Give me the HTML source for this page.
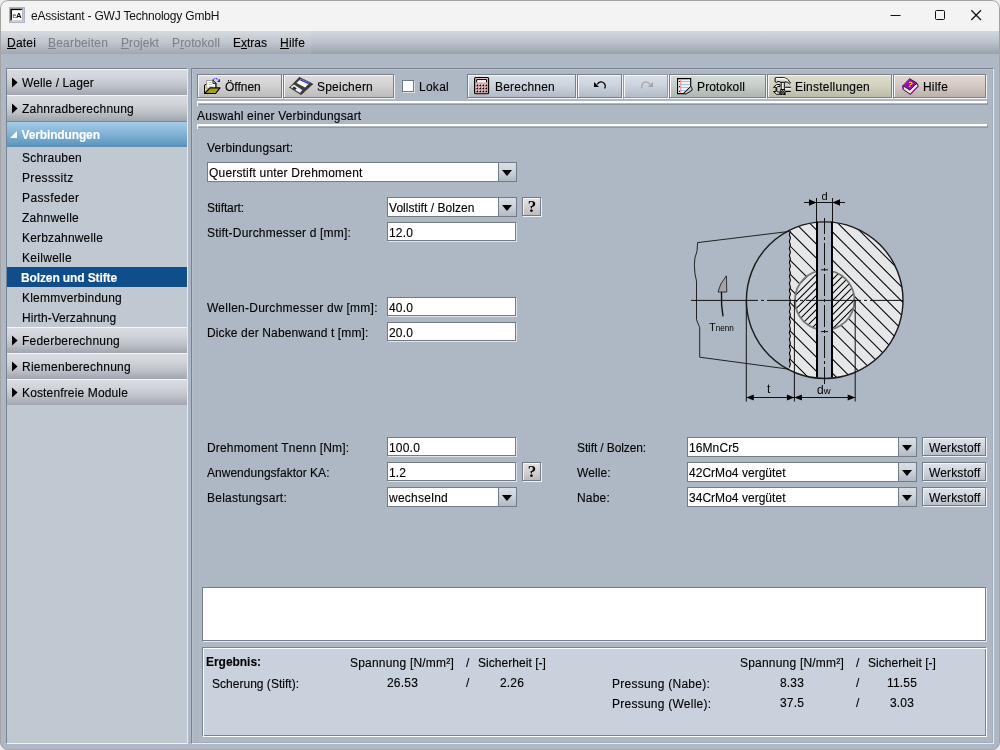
<!DOCTYPE html>
<html lang="de">
<head>
<meta charset="utf-8">
<title>eAssistant - GWJ Technology GmbH</title>
<style>
*{box-sizing:border-box;margin:0;padding:0}
html,body{width:1000px;height:750px;overflow:hidden;background:#ececec}
body{font-family:"Liberation Sans",Arial,sans-serif;font-size:12px;color:#000;position:relative;line-height:14px}
.a{position:absolute}
.t{position:absolute;white-space:nowrap;line-height:14px;height:14px;-webkit-text-stroke:0.12px currentColor}
#win{will-change:transform;position:absolute;left:0;top:0;width:1000px;height:750px;border-radius:8px;overflow:hidden;background:#adb8c4}
#frame{position:absolute;left:0;top:0;width:1000px;height:750px;border-radius:8px;border:1px solid #a3a3a3;z-index:50}
#title{position:absolute;left:0;top:0;width:1000px;height:31px;background:#f3f3f3}
#menu{position:absolute;left:0;top:31px;width:1000px;height:23px;background:linear-gradient(#d3d8de 0%,#bbc2cb 50%,#9da5af 94%,#99a1ab 100%)}
.dis{color:#7d828a}
u{text-decoration:none;border-bottom:1px solid currentColor;display:inline-block;height:13px;line-height:14px}
#side{position:absolute;left:6px;top:68px;width:182px;height:676px;background:#c0c8d1;border-top:1px solid #79828d;border-left:1px solid #79828d;border-right:1px solid #e6eaee;border-bottom:1px solid #f0f3f6}
.hd{position:absolute;left:7px;width:180px;height:26px;border-top:1px solid #f3f5f7;background:linear-gradient(#d8dce1 0%,#d1d5db 30%,#bbc0c7 68%,#a0a5ae 100%)}
.hd.sel{border-top:1px solid #6b8ea6;background:linear-gradient(#a6cbe7 0%,#8fbcdd 30%,#70a5cb 70%,#5a8fb8 100%)}
.ar{position:absolute;left:5px;top:7px;width:6px;height:11px;background:#000;clip-path:polygon(0 0.6px,5.6px 5.5px,0 10.400px)}
.ad{position:absolute;left:3px;top:9px;width:0;height:0;border-bottom:7px solid #fff;border-left:7px solid transparent}
#main{position:absolute;left:191px;top:68px;width:803px;height:676px;border-top:1px solid #79828d;border-left:1px solid #79828d;border-right:1px solid #e6eaee;border-bottom:1px solid #e6eaee;box-shadow:inset 1px 1px 0 #b8c2cd,inset -1px -1px 0 #a2adb9}
.sep{position:absolute;left:197px;width:790px;height:3px}
.sep:before{content:"";position:absolute;left:1px;top:1px;width:789px;height:2px;border-right:1px solid #8d96a1;border-bottom:1px solid #8d96a1}
.sep:after{content:"";position:absolute;left:0;top:0;width:789px;height:3px;border-top:2px solid #fff;border-left:1px solid #fff}
#log{position:absolute;left:202px;top:587px;width:785px;height:55px;background:#fff;border-top:1px solid #757e89;border-left:1px solid #757e89;border-right:1px solid #e8ebef;border-bottom:1px solid #e8ebef;box-shadow:inset -1px -1px 0 #757e89}
#res{position:absolute;left:202px;top:647px;width:785px;height:90px;background:#c8d1dc;border-top:1px solid #79828d;border-left:1px solid #79828d;border-right:1px solid #fff;border-bottom:1px solid #fff;box-shadow:inset 1px 1px 0 #fff,inset -1px -1px 0 #79828d}
.btn{position:absolute;top:74px;height:24px;border:1px solid #78808a;box-shadow:1px 1px 0 #f0f2f5,inset 1px 1px 0 #f4f6f8}
.btn.off{border-color:#949ca6}
.g0{background:linear-gradient(#dedede,#d2d2d2 45%,#bcbcbc)}
.g1{background:linear-gradient(#dbe0e7,#cdd4dd 45%,#b2bbc6)}
.g2{background:linear-gradient(#d5dcd7,#c7cfca 45%,#adb6b2)}
.g3{background:linear-gradient(#dfdecc,#d4d3c1 45%,#bbbba9)}
.g4{background:linear-gradient(#e2d8d2,#d6cac4 45%,#bcb0ab)}
.cb{position:absolute;height:20px;background:#fff;border:1px solid #727c87}
.cb i{position:absolute;right:0;top:0;width:18px;height:18px;border-left:1px solid #727c87;background:linear-gradient(#dbe0e7,#ccd3dc 45%,#b0bac5)}
.cb i:after{content:"";position:absolute;left:3px;top:7px;border-top:6px solid #000;border-left:5px solid transparent;border-right:5px solid transparent}
.tf{position:absolute;height:19px;background:#fff;border:1px solid #727c87;box-shadow:1px 1px 0 #dfe4e9}
.qb{position:absolute;width:19px;height:19px;border:1px solid #727a84;box-shadow:1px 1px 0 #f0f2f5,inset 1px 1px 0 #f6f6f6;background:linear-gradient(#e4e4e4,#d4d4d4 45%,#bcbcbc);font-family:"Liberation Serif",serif;font-weight:bold;font-size:17px;line-height:18px;text-align:center;padding-left:1px}
.wb{position:absolute;width:64px;height:19px;border:1px solid #727a84;box-shadow:1px 1px 0 #f0f2f5,inset 1px 1px 0 #f4f6f8;background:linear-gradient(#dfe3e9,#d0d6de 45%,#b6bfc9)}
</style>
</head>
<body>
<div id="win">
<div id="title"></div>
<svg class="a" style="left:9px;top:7px" width="16" height="16" viewBox="0 0 16 16"><rect width="16" height="16" fill="#a9b5c5"/><rect x="1.200" y="1.600" width="13.600" height="13.400" fill="#d0d0d0"/><rect x="1.400" y="1.800" width="12.200" height="12" fill="#000"/><rect x="2.900" y="3.100" width="10.700" height="10.700" fill="#fff"/><path d="M1.400 13.800l1.500-1.400v1.400zM13.600 1.800l-1.400 1.300h1.400z" fill="#d0d0d0"/><text x="3.400" y="10.800" font-family="Liberation Sans, sans-serif" font-size="7" fill="#333">e</text><text x="6.900" y="10.800" font-family="Liberation Sans, sans-serif" font-weight="bold" font-size="7.800" fill="#000">A</text></svg>
<div class="t" style="left:31px;top:9px;font-size:12px;letter-spacing:-0.2px;color:#111;-webkit-text-stroke:0">eAssistant - GWJ Technology GmbH</div>
<svg class="a" style="left:880px;top:0" width="120" height="31" viewBox="0 0 120 31" fill="none" stroke="#111" stroke-width="1"><path d="M10.500 15.500h10"/><rect x="55.500" y="10.500" width="9" height="9" rx="1"/><path d="M91.300 10.300l9.700 9.700M101 10.300l-9.700 9.700" stroke-width="1.250"/></svg>
<div id="menu"></div><div class="a" style="left:0;top:31px;width:311px;height:23px;background:rgba(255,255,255,0.07)"></div>
<div class="t" style="left:7px;top:36px;letter-spacing:0.197px"><u>D</u>atei</div>
<div class="t dis" style="left:48px;top:36px;letter-spacing:0.196px"><u>B</u>earbeiten</div>
<div class="t dis" style="left:121px;top:36px;letter-spacing:0.093px"><u>P</u>rojekt</div>
<div class="t dis" style="left:172px;top:36px;letter-spacing:0.146px">P<u>r</u>otokoll</div>
<div class="t" style="left:233px;top:36px;letter-spacing:-0.001px">E<u>x</u>tras</div>
<div class="t" style="left:280px;top:36px;letter-spacing:0.199px"><u>H</u>ilfe</div>
<div id="side"></div>
<div class="hd" style="top:69px"><i class="ar"></i></div>
<div class="t" style="left:22px;top:76px;letter-spacing:0.100px">Welle / Lager</div>
<div class="hd" style="top:95px"><i class="ar"></i></div>
<div class="t" style="left:22px;top:102px;letter-spacing:0.230px">Zahnradberechnung</div>
<div class="hd sel" style="top:121px"><i class="ad"></i></div>
<div class="t" style="left:21.5px;top:128px;letter-spacing:-0.139px;font-weight:bold;color:#fff">Verbindungen</div>
<div class="t" style="left:22px;top:151px;letter-spacing:0.217px">Schrauben</div>
<div class="t" style="left:22px;top:171px;letter-spacing:0.314px">Presssitz</div>
<div class="t" style="left:22px;top:191px;letter-spacing:0.386px">Passfeder</div>
<div class="t" style="left:22px;top:211px;letter-spacing:0.256px">Zahnwelle</div>
<div class="t" style="left:22px;top:231px;letter-spacing:0.176px">Kerbzahnwelle</div>
<div class="t" style="left:22px;top:251px;letter-spacing:0.294px">Keilwelle</div>
<div class="a" style="left:7px;top:267px;width:180px;height:20px;background:#0f4e8b"></div>
<div class="t" style="left:21px;top:271px;letter-spacing:-0.117px;font-weight:bold;color:#fff">Bolzen und Stifte</div>
<div class="t" style="left:22px;top:291px;letter-spacing:0.219px">Klemmverbindung</div>
<div class="t" style="left:22px;top:311px;letter-spacing:0.059px">Hirth-Verzahnung</div>
<div class="hd" style="top:327px"><i class="ar"></i></div>
<div class="t" style="left:22px;top:334px;letter-spacing:0.218px">Federberechnung</div>
<div class="hd" style="top:353px"><i class="ar"></i></div>
<div class="t" style="left:22px;top:360px;letter-spacing:0.266px">Riemenberechnung</div>
<div class="hd" style="top:379px"><i class="ar"></i></div>
<div class="t" style="left:22px;top:386px;letter-spacing:0.145px">Kostenfreie Module</div>
<div id="main"></div>
<div class="btn g0" style="left:197px;width:85px"></div>
<div class="btn g0" style="left:283px;width:111px"></div>
<div class="a" style="left:402px;top:80px;width:12px;height:12px;background:#fff;border:1px solid #727a85;box-shadow:1px 1px 0 #dde2e8"></div>
<div class="btn g1" style="left:467px;width:109px"></div>
<div class="btn g1" style="left:577px;width:45px"></div>
<div class="btn g1 off" style="left:623px;width:45px"></div>
<div class="btn g2" style="left:669px;width:97px"></div>
<div class="btn g3" style="left:767px;width:125px"></div>
<div class="btn g4" style="left:893px;width:93px"></div>
<svg class="a" style="left:204px;top:78px" width="17" height="17" viewBox="0 0 17 17">
  <path d="M8.700 2.300Q11.500-1.300 14.200 1.900" fill="none" stroke="#3434e4" stroke-width="1.100" stroke-dasharray="1.300 0.700"/><path d="M16 0.700v3.300h-3z" fill="#1c1cf0"/>
  <path d="M2.700 2.500h6.300l2.700 2.700v5h-9z" fill="#fff" stroke="#8a8a8a" stroke-width="0.800"/><path d="M8.800 2.300l3.200 3.200v4" fill="none" stroke="#000" stroke-width="1.100"/><path d="M9 2.800v2.600h2.600" fill="#fff" stroke="#000" stroke-width="0.900"/>
  <path d="M4.500 4.500h3.500M4.500 6.500h4M4.500 8.500h5" stroke="#c4c4c4" stroke-width="0.800"/>
  <path d="M0.900 7.200l1.500-0.700v8.200l-1.500 0.800z" fill="#dcdc48"/><path d="M0.500 15.600V7l1.900-0.900" fill="none" stroke="#000" stroke-width="1"/>
  <path d="M0.600 15.500l5.400-5.600h10l-4.300 5.600z" fill="#a0a010" stroke="#000" stroke-width="1.100" stroke-linejoin="round"/>
</svg>
<svg class="a" style="left:288px;top:76px" width="26" height="20" viewBox="-0.500 -0.600 26 20">
  <path d="M10.800 0.700l13.600 6.700-11.800 10.700-11.600-7.200z" fill="#3c3c3c" stroke="#1a1a1a" stroke-width="0.800" stroke-dasharray="1 0.700"/>
  <path d="M12.300 2.500l8.500 4-4.200 4.300-8.600-4.300z" fill="#fff"/><path d="M12.300 2.500l8.500 4-1 1.100-8.600-4z" fill="#3c3cf0"/>
  <path d="M2 10.300l3.500-2.300 8.300 5.500-2.300 3z" fill="#e8e8e8"/><path d="M5.200 9.800l3 1.900-1.600 1.700-2.600-1.700z" fill="#222"/><path d="M9 12l2.400 1.500-1.400 1.700-2.300-1.600z" fill="#f4f4f4"/>
</svg>
<svg class="a" style="left:474px;top:77px" width="16" height="18" viewBox="0 0 16 18">
  <rect x="0.600" y="0.600" width="14" height="16.200" rx="1.100" fill="#dcaab2" stroke="#000" stroke-width="1.100"/><path d="M1.500 1.600h12.200" stroke="#f0d4d8" stroke-width="0.800"/>
  <rect x="2.700" y="2.900" width="9.800" height="2.300" fill="#fff"/><path d="M2.700 5.200V2.600h9.800V5.200" fill="none" stroke="#000" stroke-width="1"/>
  <g fill="#000"><rect x="2.500" y="7.600" width="1.600" height="1.600"/><rect x="5.500" y="7.600" width="1.600" height="1.600"/><rect x="8.500" y="7.600" width="1.600" height="1.600"/><rect x="11.500" y="7.600" width="1.600" height="1.600"/>
  <rect x="2.500" y="10.600" width="1.600" height="1.600"/><rect x="5.500" y="10.600" width="1.600" height="1.600"/><rect x="8.500" y="10.600" width="1.600" height="1.600"/><rect x="11.500" y="10.600" width="1.600" height="1.600"/>
  <rect x="2.500" y="13.600" width="1.600" height="1.600"/><rect x="5.500" y="13.600" width="1.600" height="1.600"/><rect x="8.500" y="13.600" width="1.600" height="1.600"/><rect x="11.500" y="13.600" width="1.600" height="1.600"/></g>
  <g fill="#fff" opacity="0.800"><rect x="1.800" y="7" width="1" height="1"/><rect x="4.800" y="7" width="1" height="1"/><rect x="7.800" y="7" width="1" height="1"/><rect x="10.800" y="7" width="1" height="1"/>
  <rect x="1.800" y="10" width="1" height="1"/><rect x="4.800" y="10" width="1" height="1"/><rect x="7.800" y="10" width="1" height="1"/><rect x="10.800" y="10" width="1" height="1"/>
  <rect x="1.800" y="13" width="1" height="1"/><rect x="4.800" y="13" width="1" height="1"/><rect x="7.800" y="13" width="1" height="1"/><rect x="10.800" y="13" width="1" height="1"/></g>
</svg>
<svg class="a" style="left:593px;top:81px" width="14" height="10" viewBox="0 0 14 10">
  <path d="M1 1v5h5z" fill="#000"/><path d="M4 3.500q3.500-4.500 7.200-1.200q2 2.300 0.400 5.200" fill="none" stroke="#000" stroke-width="1.200"/></svg>
<svg class="a" style="left:640px;top:81px" width="14" height="10" viewBox="0 0 14 10">
  <path d="M13 1v5h-5z" fill="#a2a2a2"/><path d="M10 3.500q-3.500-4.500-7.200-1.200q-2 2.300-0.400 5.200" fill="none" stroke="#a2a2a2" stroke-width="1.100"/></svg>
<svg class="a" style="left:677px;top:78px" width="17" height="17" viewBox="0 0 17 17">
  <path d="M0.600 0.600h13.100v8l-7.300 7h-5.800z" fill="#f4f0f0" stroke="#000" stroke-width="1.100"/>
  <path d="M1.500 3.500h11.500M1.500 6.500h11.500M1.500 9.500h9.500M1.500 12.500h6.500" stroke="#8ec8ee" stroke-width="1"/><path d="M3.800 1.200v14" stroke="#f88" stroke-width="1.100"/>
  <path d="M2.500 3.500h0.010M2.500 8.500h0.010M2.500 13.500h0.010" stroke="#000" stroke-width="1.200" stroke-linecap="round"/>
  <path d="M13.700 8.600l1.300 1.100v2.600l-6 3.700-2.600-0.300z" fill="#c8c8c8" stroke="#000" stroke-width="0.900"/>
</svg>
<svg class="a" style="left:773px;top:77px" width="19" height="19" viewBox="0 0 19 19">
  <path d="M2.100 1Q3 0.300 4.500 0.400H10.500Q15 1 17.500 6L16.600 6.900Q14.500 4.500 12 4.900L11.700 5.400H7.400L6.900 4.600Q5 4.200 3.200 5.300L2.100 4.800z" fill="#dadada" stroke="#000" stroke-width="0.950" stroke-linejoin="round"/>
  <path d="M3 1.600H10.500Q13.200 2 14.800 3.600" stroke="#fff" stroke-width="1.100" fill="none"/>
  <rect x="8.200" y="5.300" width="3.100" height="7.200" fill="#fff" stroke="#000" stroke-width="0.950"/><path d="M10.400 5.800V12" stroke="#bbb" stroke-width="0.800"/>
  <rect x="7.300" y="12.300" width="5.300" height="5.700" fill="#000"/><path d="M8.300 13.500h0.900M10.300 13.500h0.900M9.300 14.700h0.900M11.300 14.700h0.700M8.300 15.900h0.900M10.300 15.900h0.900M9.300 17.100h0.900" stroke="#fff" stroke-width="0.900"/>
  <path d="M0.500 10.300L3.600 7.500H6.900V9.500H4.700L3.700 10.600V13.900L4.700 15H6.900V17.300H3.600L0.500 14.600H3.100V10.300z" fill="#e6e6e6" stroke="#000" stroke-width="0.950" stroke-linejoin="round"/>
  <rect x="12.200" y="10.300" width="5.600" height="4.100" fill="#f4f4f4"/><path d="M12.200 10.300h5.600M12.200 14.500h5.600" stroke="#000" stroke-width="1"/><path d="M12.200 13.300h5.600" stroke="#999" stroke-width="1"/>
</svg>
<svg class="a" style="left:902px;top:78px" width="17" height="17" viewBox="0 0 17 17">
  <path d="M0.800 8l0.500 3.500 7 4.800 7.800-8-0.700-2.500z" fill="#e8ece8" stroke="#000" stroke-width="0.900"/>
  <path d="M8.300 16.300l7.800-8" stroke="#a010b0" stroke-width="1.200"/>
  <path d="M7.500 0.600l7.400 4.400-7 7.200-7.200-4.600z" fill="#9a10aa" stroke="#000" stroke-width="0.700"/>
  <path d="M7.500 0.800l-6.600 6.700" stroke="#d8b0dc" stroke-width="1" stroke-dasharray="0.900 0.600"/>
  <path d="M0.800 7.800l0.400 3.400" stroke="#a010b0" stroke-width="1.200"/>
  <text x="6.200" y="8.900" font-family="Liberation Sans, sans-serif" font-weight="bold" font-size="7.500" fill="#f4f000" transform="rotate(14 8 6)">?</text>
</svg>

<div class="t" style="left:225px;top:80px;letter-spacing:-0.004px">Öffnen</div>
<div class="t" style="left:317px;top:80px;letter-spacing:0.218px">Speichern</div>
<div class="t" style="left:419px;top:80px;letter-spacing:0.263px">Lokal</div>
<div class="t" style="left:495px;top:80px;letter-spacing:0.217px">Berechnen</div>
<div class="t" style="left:697px;top:80px;letter-spacing:0.146px">Protokoll</div>
<div class="t" style="left:795px;top:80px;letter-spacing:0.227px">Einstellungen</div>
<div class="t" style="left:923px;top:80px;letter-spacing:0.199px">Hilfe</div>
<div class="sep" style="top:101px"></div>
<div class="t" style="left:197px;top:109px;letter-spacing:0.175px">Auswahl einer Verbindungsart</div>
<div class="sep" style="top:124px"></div>
<div class="t" style="left:207px;top:141px;letter-spacing:0.152px">Verbindungsart:</div>
<div class="cb" style="left:207px;top:162px;width:310px"><i></i></div>
<div class="t" style="left:209px;top:166px;letter-spacing:0.184px">Querstift unter Drehmoment</div>
<div class="t" style="left:207px;top:201px;letter-spacing:-0.112px">Stiftart:</div>
<div class="cb" style="left:387px;top:197px;width:130px"><i></i></div>
<div class="t" style="left:389px;top:201px;letter-spacing:0.035px">Vollstift / Bolzen</div>
<div class="qb" style="left:522px;top:197px">?</div>
<div class="t" style="left:207px;top:226px;letter-spacing:0.186px">Stift-Durchmesser d [mm]:</div>
<div class="tf" style="left:387px;top:222px;width:129px"></div>
<div class="t" style="left:389px;top:226px;letter-spacing:0.161px">12.0</div>
<div class="t" style="left:207px;top:301px;letter-spacing:0.258px">Wellen-Durchmesser dw [mm]:</div>
<div class="tf" style="left:387px;top:297px;width:129px"></div>
<div class="t" style="left:389px;top:301px;letter-spacing:0.161px">40.0</div>
<div class="t" style="left:207px;top:326px;letter-spacing:0.127px">Dicke der Nabenwand t [mm]:</div>
<div class="tf" style="left:387px;top:322px;width:129px"></div>
<div class="t" style="left:389px;top:326px;letter-spacing:0.161px">20.0</div>
<div class="t" style="left:207px;top:441px;letter-spacing:0.172px">Drehmoment Tnenn [Nm]:</div>
<div class="tf" style="left:387px;top:437px;width:129px"></div>
<div class="t" style="left:389px;top:441px;letter-spacing:0.194px">100.0</div>
<div class="t" style="left:207px;top:466px;letter-spacing:0.021px">Anwendungsfaktor KA:</div>
<div class="tf" style="left:387px;top:462px;width:129px"></div>
<div class="t" style="left:389px;top:466px;letter-spacing:0.106px">1.2</div>
<div class="qb" style="left:522px;top:462px">?</div>
<div class="t" style="left:207px;top:491px;letter-spacing:0.235px">Belastungsart:</div>
<div class="cb" style="left:387px;top:487px;width:130px"><i></i></div>
<div class="t" style="left:389px;top:491px;letter-spacing:0.255px">wechselnd</div>
<div class="t" style="left:577px;top:441px;letter-spacing:-0.113px">Stift / Bolzen:</div>
<div class="cb" style="left:687px;top:437px;width:230px"><i></i></div>
<div class="t" style="left:689px;top:441px;letter-spacing:0.092px">16MnCr5</div>
<div class="wb" style="left:922px;top:437px"></div>
<div class="t" style="left:929px;top:441px;letter-spacing:0.148px">Werkstoff</div>
<div class="t" style="left:577px;top:466px;letter-spacing:0.110px">Welle:</div>
<div class="cb" style="left:687px;top:462px;width:230px"><i></i></div>
<div class="t" style="left:689px;top:466px;letter-spacing:0.028px">42CrMo4 vergütet</div>
<div class="wb" style="left:922px;top:462px"></div>
<div class="t" style="left:929px;top:466px;letter-spacing:0.148px">Werkstoff</div>
<div class="t" style="left:577px;top:491px;letter-spacing:0.196px">Nabe:</div>
<div class="cb" style="left:687px;top:487px;width:230px"><i></i></div>
<div class="t" style="left:689px;top:491px;letter-spacing:0.028px">34CrMo4 vergütet</div>
<div class="wb" style="left:922px;top:487px"></div>
<div class="t" style="left:929px;top:491px;letter-spacing:0.148px">Werkstoff</div>
  <svg class="a" style="left:680px;top:180px" width="240" height="240" viewBox="680 180 240 240" font-family="Liberation Sans, sans-serif">
    <defs>
      <clipPath id="hubL"><rect x="789.8" y="215" width="27.200000000000045" height="170"/></clipPath>
      <clipPath id="hubR"><rect x="832.0" y="215" width="80" height="170"/></clipPath>
      <clipPath id="big"><circle cx="824.7" cy="300.2" r="78.3"/></clipPath>
      <clipPath id="inn"><circle cx="824.7" cy="300.2" r="29.8"/></clipPath>
      <mask id="hubm"><rect x="680" y="180" width="240" height="240" fill="#000"/><rect x="789.8" y="215" width="27.200000000000045" height="170" fill="#fff"/><rect x="832.0" y="215" width="80" height="170" fill="#fff"/><circle cx="824.7" cy="300.2" r="29.8" fill="#000"/></mask>
      <mask id="innm"><rect x="680" y="180" width="240" height="240" fill="#000"/><rect x="789.8" y="215" width="27.200000000000045" height="170" fill="#fff"/><rect x="832.0" y="215" width="80" height="170" fill="#fff"/></mask>
    </defs>
    <g clip-path="url(#big)">
      <rect x="789.8" y="215" width="27.200000000000045" height="170" fill="#e6e7e8"/><rect x="832.0" y="215" width="80" height="170" fill="#e6e7e8"/>
      <g mask="url(#hubm)"><path d="M780 66.3L910 196.3M780 80.4L910 210.4M780 94.6L910 224.6M780 108.7L910 238.7M780 122.8L910 252.8M780 137.0L910 267.0M780 151.1L910 281.1M780 165.3L910 295.3M780 179.4L910 309.4M780 193.5L910 323.5M780 207.7L910 337.7M780 221.8L910 351.8M780 236.0L910 366.0M780 250.1L910 380.1M780 264.2L910 394.2M780 278.4L910 408.4M780 292.5L910 422.5M780 306.7L910 436.7M780 320.8L910 450.8M780 334.9L910 464.9M780 349.1L910 479.1M780 363.2L910 493.2" stroke="#000" stroke-width="1.050" fill="none"/></g>
      <g mask="url(#innm)"><g clip-path="url(#inn)"><path d="M790 251.2L860 181.2M790 258.2L860 188.2M790 265.3L860 195.3M790 272.4L860 202.4M790 279.4L860 209.4M790 286.5L860 216.5M790 293.6L860 223.6M790 300.7L860 230.7M790 307.7L860 237.7M790 314.8L860 244.8M790 321.9L860 251.9M790 328.9L860 258.9M790 336.0L860 266.0M790 343.1L860 273.1M790 350.1L860 280.1M790 357.2L860 287.2M790 364.3L860 294.3M790 371.3L860 301.3M790 378.4L860 308.4M790 385.5L860 315.5M790 392.6L860 322.6M790 399.6L860 329.6M790 406.7L860 336.7M790 413.8L860 343.8M790 420.8L860 350.8" stroke="#000" stroke-width="1.050" fill="none"/></g></g>
      <g mask="url(#innm)"><circle cx="824.7" cy="300.2" r="29.8" fill="none" stroke="#787878" stroke-width="1.800"/></g>
    </g>
    <path d="M790.4 231.0L789.4 234.5L790.4 238.0L789.4 241.5L790.4 245.0L789.4 248.5L790.4 252.0L789.4 255.5L790.4 259.0L789.4 262.5L790.4 266.0L789.4 269.5L790.4 273.0L789.4 276.5L790.4 280.0L789.4 283.5L790.4 287.0L789.4 290.5L790.4 294.0L789.4 297.5L790.4 301.0L789.4 304.5L790.4 308.0L789.4 311.5L790.4 315.0L789.4 318.5L790.4 322.0L789.4 325.5L790.4 329.0L789.4 332.5L790.4 336.0L789.4 339.5L790.4 343.0L789.4 346.5L790.4 350.0L789.4 353.5L790.4 357.0L789.4 360.5L790.4 364.0L789.4 367.5" fill="none" stroke="#000" stroke-width="1.100"/>
    <circle cx="824.7" cy="300.2" r="78.3" fill="none" stroke="#1a1a1a" stroke-width="1.400"/>
    <path d="M817.0 221.500V377.300M832.0 221.500V377.300" stroke="#000" stroke-width="2"/>
    <path d="M816.500 198V222M832.500 198V222" stroke="#111" stroke-width="1"/>
    <path d="M804 202.500H845" stroke="#111" stroke-width="1"/>
    <path d="M816.500 202.500l-7.500-3.200v6.400zM832.500 202.500l7.500-3.200v6.400z" fill="#000"/>
    <text x="821.500" y="199.900" font-size="11">d</text>
    <path d="M824.500 218V384" stroke="#111" stroke-width="1" stroke-dasharray="22 3 3 3" stroke-dashoffset="6"/>
    <path d="M821 269.800h7M821 331.600h7" stroke="#111" stroke-width="1"/>
    <path d="M691 300.400H903" stroke="#111" stroke-width="1" stroke-dasharray="67 3 3 3 30 3 3 3 55 3 3 3 200"/>
    <path d="M789.400 231.400L697.600 242.600L697 251.200Q694 258 694.400 265.600Q694.500 274 696.500 281.200V319.600L699.700 327.600V357.200L789 369.200" fill="none" stroke="#111" stroke-width="0.900"/>
    <path d="M746.300 300V401.500M794.400 300.400V401.500M855.200 300.400V401.500" stroke="#111" stroke-width="1"/>
    <path d="M746.300 397.500H855.200" stroke="#111" stroke-width="1"/>
    <path d="M746.300 397.500l7.500-3v6zM794.400 397.500l-7.500-3v6zM794.400 397.500l7.500-3v6zM855.200 397.500l-7.500-3v6z" fill="#000"/>
    <text x="767" y="393.300" font-size="12">t</text>
    <text x="817" y="393.700" font-size="12">d<tspan font-size="9.500">w</tspan></text>
    <path d="M726.400 275.800Q719.500 284 718 292H726.800z" fill="#a4a4a4" stroke="#222" stroke-width="0.900" stroke-linejoin="round"/>
    <path d="M721.500 292Q721 305 723 316.400" fill="none" stroke="#111" stroke-width="1.400"/>
    <text x="709.300" y="331.300" font-size="11.500" textLength="24.500" lengthAdjust="spacingAndGlyphs">T<tspan font-size="9">nenn</tspan></text>
  </svg>

<div id="log"></div><div id="res"></div>
<div class="t" style="left:206px;top:655px;letter-spacing:-0.038px;font-weight:bold">Ergebnis:</div>
<div class="t" style="left:350px;top:656px;letter-spacing:0.206px">Spannung [N/mm²]</div>
<div class="t" style="left:466px;top:656px;letter-spacing:-0.334px">/</div>
<div class="t" style="left:478px;top:656px;letter-spacing:0.046px">Sicherheit [-]</div>
<div class="t" style="left:212px;top:677px;letter-spacing:0.018px">Scherung (Stift):</div>
<div class="t" style="left:387px;top:676px;letter-spacing:0.194px">26.53</div>
<div class="t" style="left:466px;top:676px;letter-spacing:-0.334px">/</div>
<div class="t" style="left:500px;top:676px;letter-spacing:0.161px">2.26</div>
<div class="t" style="left:740px;top:656px;letter-spacing:0.206px">Spannung [N/mm²]</div>
<div class="t" style="left:856px;top:656px;letter-spacing:-0.334px">/</div>
<div class="t" style="left:868px;top:656px;letter-spacing:0.046px">Sicherheit [-]</div>
<div class="t" style="left:612px;top:677px;letter-spacing:0.247px">Pressung (Nabe):</div>
<div class="t" style="left:780px;top:676px;letter-spacing:0.161px">8.33</div>
<div class="t" style="left:856px;top:676px;letter-spacing:-0.334px">/</div>
<div class="t" style="left:887px;top:676px;letter-spacing:0.194px">11.55</div>
<div class="t" style="left:612px;top:697px;letter-spacing:0.243px">Pressung (Welle):</div>
<div class="t" style="left:780px;top:696px;letter-spacing:0.161px">37.5</div>
<div class="t" style="left:856px;top:696px;letter-spacing:-0.334px">/</div>
<div class="t" style="left:890px;top:696px;letter-spacing:0.161px">3.03</div>
<div id="frame"></div>
</div>
</body>
</html>
